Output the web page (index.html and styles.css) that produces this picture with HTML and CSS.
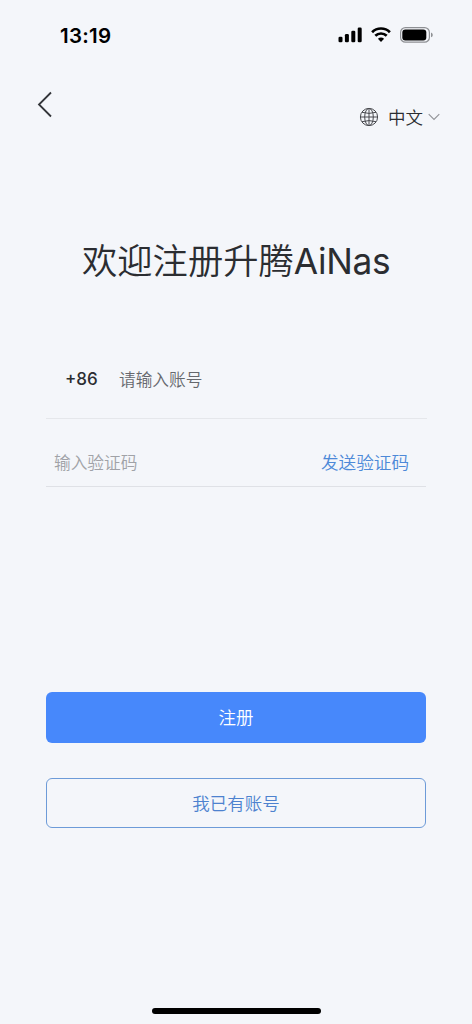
FILE: index.html
```html
<!DOCTYPE html>
<html lang="zh-CN">
<head>
<meta charset="utf-8">
<title>注册</title>
<link rel="stylesheet" href="styles.css">
</head>
<body>
<main class="screen">
  <header class="status">
    <span class="time">13:19</span>
    <div class="indicators">
      <svg class="signal" width="24" height="16" viewBox="0 0 24 16"><rect x="0.5" y="9.8" width="4" height="5.5" rx="1.3"/><rect x="6.9" y="7" width="4" height="8.3" rx="1.3"/><rect x="13.3" y="3.8" width="4" height="11.5" rx="1.3"/><rect x="19.7" y="0.5" width="4" height="14.8" rx="1.3"/></svg>
      <svg class="wifi" width="20" height="16" viewBox="0 0 20 16"><path d="M1.1 5.2a12.6 12.6 0 0 1 17.8 0M4.3 8.8a8.2 8.2 0 0 1 11.4 0" fill="none" stroke="#000" stroke-width="2.7"/><path d="M6.9 11.8a4.6 4.6 0 0 1 6.2 0L10 15z"/></svg>
      <svg class="battery" width="34" height="16" viewBox="0 0 34 16"><rect x="0.6" y="0.6" width="28.8" height="14.6" rx="4.8" fill="none" stroke="#8e9094" stroke-width="1.2"/><rect x="2.3" y="2.4" width="24" height="11" rx="3"/><path d="M31 5.6v4.6q1.8-.7 1.8-2.3T31 5.6z" fill="#8e9094"/></svg>
    </div>
  </header>
  <nav class="nav">
    <svg class="back" width="16" height="27" viewBox="0 0 16 27"><path d="M14 1.5 2 13.5 14 25.5" fill="none" stroke="#333539" stroke-width="1.8"/></svg>
    <div class="language">
      <svg class="globe" width="20" height="20" viewBox="0 0 20 20" fill="none" stroke="#48494e" stroke-width="1"><circle cx="10" cy="10" r="8.6"/><ellipse cx="10" cy="10" rx="4.3" ry="8.6"/><path d="M10 1.4v17.2M1.4 10h17.2M3 5.3q7 2.2 14 0M3 14.7q7-2.2 14 0"/></svg>
      <span>中文</span>
      <svg class="chevron" width="12" height="8" viewBox="0 0 12 8"><path d="m.7 1.2 5.3 5.3 5.3-5.3" fill="none" stroke="#929398" stroke-width="1.1"/></svg>
    </div>
  </nav>
  <h1 class="title">欢迎注册升腾<span class="latin">AiNas</span></h1>
  <section class="form">
    <div class="field phone"><span class="code">+86</span><span class="account">请输入账号</span></div>
    <div class="field verify"><span class="hint">输入验证码</span><span class="send">发送验证码</span></div>
  </section>
  <div class="actions">
    <div class="button primary">注册</div>
    <div class="button outline">我已有账号</div>
  </div>
  <div class="home-bar"></div>
</main>
</body>
</html>
```
FILE: styles.css
```css
* { box-sizing: border-box; }
body { margin: 0; background: #f4f6fa; }
.screen {
  display: flex;
  flex-direction: column;
  width: 472px;
  height: 1024px;
  overflow: hidden;
  background: #f4f6fa;
  color: #2b2d31;
  font-family: Inter, "Noto Sans CJK SC", sans-serif;
  font-weight: 350;
}
svg { display: block; flex: none; }
.status {
  display: flex;
  justify-content: space-between;
  align-items: center;
  height: 70px;
  padding: 0 38px 0 60px;
}
.time { color: #000; font-size: 20.5px; font-weight: 600; letter-spacing: 0.25px; }
.indicators { display: flex; align-items: center; gap: 9px; }
.nav {
  display: flex;
  justify-content: space-between;
  height: 70px;
  padding: 21px 32px 0 37px;
}
.language {
  display: flex;
  align-items: center;
  height: 26px;
  margin-top: 13px;
  font-size: 17.5px;
}
.language span { margin: 0 5px 0 9px; padding-bottom: 2px; }
.title {
  height: 60px;
  margin: 92px 0 0;
  padding-left: 82px;
  font-size: 35.3px;
  font-weight: 350;
  line-height: 60px;
  white-space: nowrap;
}
.latin { font-weight: 370; letter-spacing: -0.3px; }
.form { width: 381px; margin: 48px 0 0 46px; }
.field {
  display: flex;
  align-items: center;
  border-bottom: 1px solid #e5e7eb;
}
.phone { height: 79px; padding: 0 0 1px 19px; }
.code { width: 54px; font-size: 17px; font-weight: 450; }
.account { color: #66686d; font-size: 16.7px; }
.verify {
  justify-content: space-between;
  width: 380px;
  height: 68px;
  padding: 18px 17px 0 8px;
  border-color: #dfe1e6;
}
.hint { color: #a0a2a7; font-size: 16.7px; }
.send { color: #4d89d8; font-size: 17.6px; }
.actions {
  display: flex;
  flex-direction: column;
  gap: 35px;
  width: 380px;
  margin: 205px 0 0 46px;
}
.button {
  display: flex;
  align-items: center;
  justify-content: center;
  height: 51px;
  padding-bottom: 2px;
  border-radius: 6px;
  font-size: 17.5px;
}
.primary { background: #4788fb; color: #fff; }
.outline { height: 50px; border: 1px solid #6d9bd8; color: #4d82cf; }
.home-bar {
  width: 169px;
  height: 6px;
  margin: auto 0 10px 152px;
  border-radius: 3px;
  background: #000;
}
```
